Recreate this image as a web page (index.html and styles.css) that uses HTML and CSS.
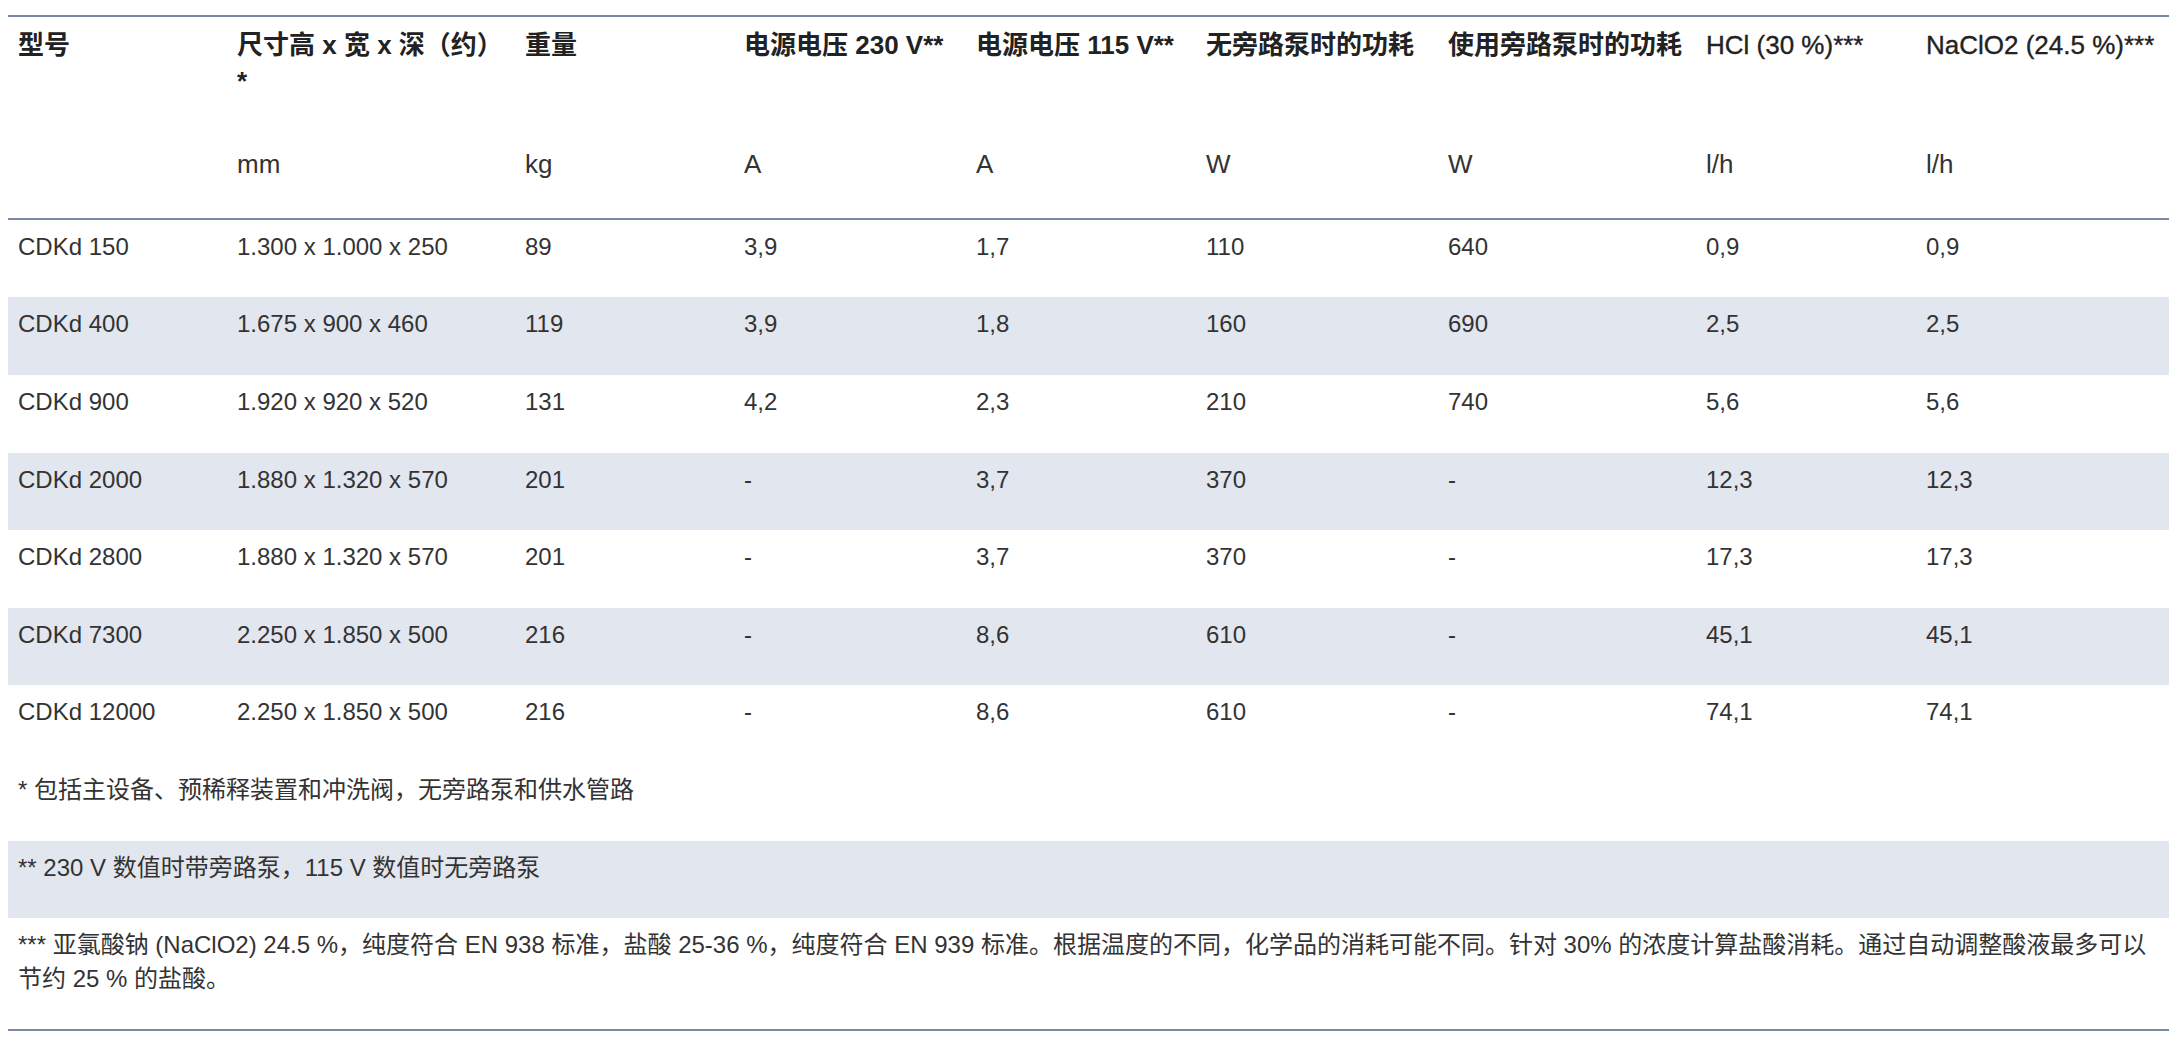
FILE: index.html
```html
<!DOCTYPE html>
<html lang="zh-CN">
<head>
<meta charset="utf-8">
<title>CDKd 技术数据</title>
<link rel="stylesheet" href="styles.css">
</head>
<body>
<table class="spec">
  <colgroup>
    <col class="c-model">
    <col class="c-size">
    <col class="c-weight">
    <col class="c-v230">
    <col class="c-v115">
    <col class="c-pw1">
    <col class="c-pw2">
    <col class="c-hcl">
    <col class="c-naclo">
  </colgroup>
  <thead>
    <tr class="title">
      <th>型号</th>
      <th>尺寸高 x 宽 x 深（约）*</th>
      <th>重量</th>
      <th>电源电压 230 V**</th>
      <th>电源电压 115 V**</th>
      <th>无旁路泵时的功耗</th>
      <th>使用旁路泵时的功耗</th>
      <th><span class="lat">HCl (30 %)***</span></th>
      <th><span class="lat">NaClO2 (24.5 %)***</span></th>
    </tr>
    <tr class="units">
      <td></td>
      <td>mm</td>
      <td>kg</td>
      <td>A</td>
      <td>A</td>
      <td>W</td>
      <td>W</td>
      <td>l/h</td>
      <td>l/h</td>
    </tr>
  </thead>
  <tbody>
    <tr><td>CDKd 150</td><td>1.300 x 1.000 x 250</td><td>89</td><td>3,9</td><td>1,7</td><td>110</td><td>640</td><td>0,9</td><td>0,9</td></tr>
    <tr><td>CDKd 400</td><td>1.675 x 900 x 460</td><td>119</td><td>3,9</td><td>1,8</td><td>160</td><td>690</td><td>2,5</td><td>2,5</td></tr>
    <tr><td>CDKd 900</td><td>1.920 x 920 x 520</td><td>131</td><td>4,2</td><td>2,3</td><td>210</td><td>740</td><td>5,6</td><td>5,6</td></tr>
    <tr><td>CDKd 2000</td><td>1.880 x 1.320 x 570</td><td>201</td><td>-</td><td>3,7</td><td>370</td><td>-</td><td>12,3</td><td>12,3</td></tr>
    <tr><td>CDKd 2800</td><td>1.880 x 1.320 x 570</td><td>201</td><td>-</td><td>3,7</td><td>370</td><td>-</td><td>17,3</td><td>17,3</td></tr>
    <tr><td>CDKd 7300</td><td>2.250 x 1.850 x 500</td><td>216</td><td>-</td><td>8,6</td><td>610</td><td>-</td><td>45,1</td><td>45,1</td></tr>
    <tr><td>CDKd 12000</td><td>2.250 x 1.850 x 500</td><td>216</td><td>-</td><td>8,6</td><td>610</td><td>-</td><td>74,1</td><td>74,1</td></tr>
  </tbody>
  <tfoot>
    <tr><td colspan="9">* 包括主设备、预稀释装置和冲洗阀，无旁路泵和供水管路</td></tr>
    <tr><td colspan="9">** 230 V 数值时带旁路泵，115 V 数值时无旁路泵</td></tr>
    <tr class="last"><td colspan="9">*** 亚氯酸钠 (NaClO2) 24.5 %，纯度符合 EN 938 标准，盐酸 25-36 %，纯度符合 EN 939 标准。根据温度的不同，化学品的消耗可能不同。针对 30% 的浓度计算盐酸消耗。通过自动调整酸液最多可以节约 25 % 的盐酸。</td></tr>
  </tfoot>
</table>
</body>
</html>
```

FILE: styles.css
```css
html {
  background: #ffffff;
}

body {
  margin: 8px;
  font-family: "Liberation Sans", "Noto Sans CJK SC", sans-serif;
  color: #333333;
}

.spec {
  width: 2161px;
  margin-top: 7px;
  table-layout: fixed;
  border-collapse: separate;
  border-spacing: 0;
}

.c-model { width: 219px; }
.c-size { width: 288px; }
.c-weight { width: 219px; }
.c-v230 { width: 232px; }
.c-v115 { width: 230px; }
.c-pw1 { width: 242px; }
.c-pw2 { width: 258px; }
.c-hcl { width: 220px; }
.c-naclo { width: 253px; }

.spec th,
.spec td {
  text-align: left;
  vertical-align: top;
}

.spec th {
  font-size: 26px;
  line-height: 36.4px;
  font-weight: 700;
  color: #222222;
  padding: 10px 10px 38px;
  border-top: 2px solid #7a8aa5;
}

.spec th .lat {
  font-weight: 400;
  -webkit-text-stroke: 0.35px #222222;
}

.spec td {
  font-size: 24px;
  line-height: 33.6px;
  padding: 10px 10px 34px;
}

.spec .units td {
  font-size: 26px;
  line-height: 36.4px;
  padding: 8px 10px 35.6px;
  border-bottom: 2px solid #7a8aa5;
}

.spec tbody tr:nth-child(even) td,
.spec tfoot tr:nth-child(even) td {
  background: #e2e6ee;
}

.spec tfoot tr.last td {
  border-bottom: 2px solid #7a8aa5;
}
```
